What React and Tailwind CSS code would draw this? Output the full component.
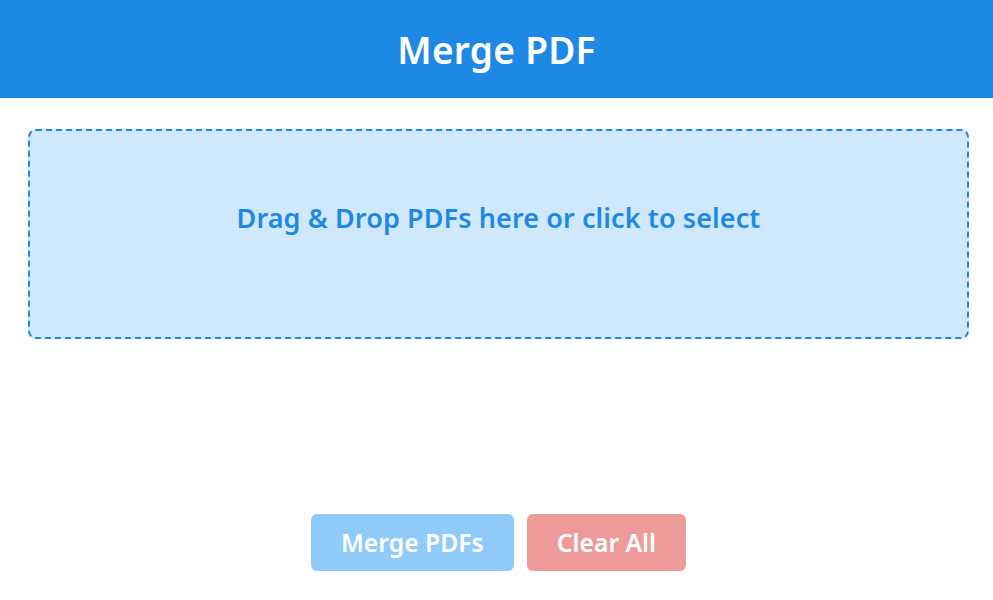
import React from "react";

const App = () => {
    return (
        <div className="min-h-screen flex flex-col bg-white font-['Noto_Sans',sans-serif]">
            {/* Header */}
            <header className="h-[98px] flex items-center justify-center bg-[#1e88e5]">
                <h1 className="text-[37px] leading-none font-semibold tracking-[0.3px] text-white">Merge PDF</h1>
            </header>

            <main className="flex-1 flex flex-col pl-[28px] pr-[24px] pt-[31px] pb-[29px]">
                {/* Drop zone */}
                <div className="h-[210px] flex justify-center pt-[69px] rounded-lg border-2 border-dashed border-[#1e88e5] bg-[#cfe8fc] cursor-pointer">
                    <p className="text-[27px] leading-[36px] font-semibold tracking-[0.1px] text-[#1e88e5]">
                        Drag &amp; Drop PDFs here or click to select
                    </p>
                </div>

                <div className="flex-1" />

                {/* Actions */}
                <div className="flex justify-center gap-[13px]">
                    <button
                        disabled
                        className="h-[57px] px-[30px] rounded-md bg-[#90caf9] text-white text-[24.7px] font-semibold"
                    >
                        Merge PDFs
                    </button>
                    <button className="h-[57px] px-[30px] rounded-md bg-[#ef9a9a] text-white text-[24.7px] font-semibold">
                        Clear All
                    </button>
                </div>
            </main>
        </div>
    );
};

export default App;
